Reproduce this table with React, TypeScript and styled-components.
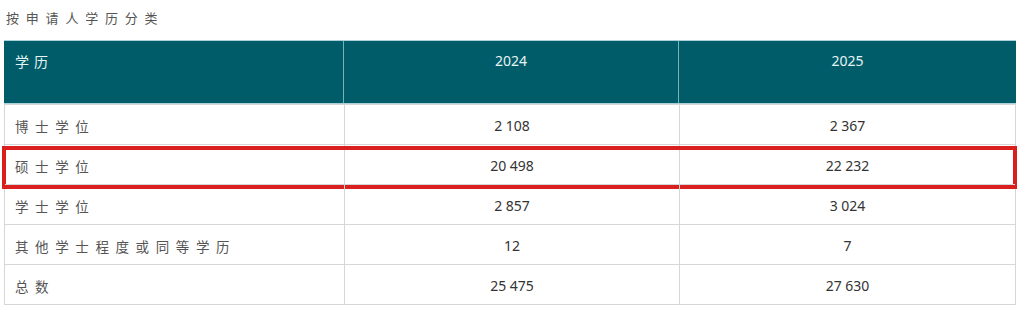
import styled, { createGlobalStyle } from "styled-components";

const GlobalStyle = createGlobalStyle`
  html, body {
    margin: 0;
    background: #fff;
  }
  body {
    font-family: "Noto Sans", "Noto Sans CJK SC", sans-serif;
  }
`;

const Page = styled.div`
  padding: 9px 8px 0 4px;
  width: 1012px;
`;

const Caption = styled.div`
  font-family: "Noto Sans CJK SC", sans-serif;
  font-size: 13px;
  line-height: 18px;
  letter-spacing: 6.8px;
  color: #555;
  padding-left: 2px;
  margin-bottom: 13px;
`;

const Table = styled.div`
  border: 1px solid #d6d6d6;
  border-top: none;
`;

const Row = styled.div<{ $highlight?: boolean }>`
  position: relative;
  box-sizing: border-box;
  display: grid;
  grid-template-columns: 339px 335px 1fr;
  height: 40px;
  padding-top: 2px;
  border-top: 1px solid #d6d6d6;

  ${(p) =>
    p.$highlight &&
    `
    &::after {
      content: "";
      position: absolute;
      left: -3px;
      right: -2px;
      top: 1px;
      bottom: -5px;
      border: 4px solid #d9201f;
      pointer-events: none;
    }
  `}
`;

const HeadRow = styled.div`
  display: grid;
  grid-template-columns: 339px 335px 1fr;
  height: 62px;
  background: #005c68;
  border-top: 1px solid #a9d1d8;
  border-bottom: 1px solid #a9d1d8;
  margin-left: -1px;
  margin-right: -1px;
`;

const HeadCell = styled.div<{ $first?: boolean }>`
  padding: 10px 10px 0 ${(p) => (p.$first ? "11px" : "10px")};
  font-family: ${(p) => (p.$first ? `"Noto Sans CJK SC"` : `"Noto Sans"`)}, sans-serif;
  font-size: 14px;
  line-height: 20px;
  letter-spacing: ${(p) => (p.$first ? "5px" : "0")};
  color: #e6f4f5;
  text-align: ${(p) => (p.$first ? "left" : "center")};
  border-left: ${(p) => (p.$first ? "none" : "1px solid #7fb0b8")};
`;

const LabelCell = styled.div`
  display: flex;
  align-items: center;
  padding-left: 10px;
  font-family: "Noto Sans CJK SC", sans-serif;
  font-size: 13.5px;
  letter-spacing: 6.6px;
  color: #555;
`;

const NumCell = styled.div`
  display: flex;
  align-items: center;
  justify-content: center;
  border-left: 1px solid #d6d6d6;
  margin-top: -2px;
  padding-top: 2px;
  font-family: "Noto Sans", sans-serif;
  font-size: 14px;
  color: #333;
`;

const rows = [
  { label: "博士学位", y2024: "2\u00a0108", y2025: "2\u00a0367" },
  { label: "硕士学位", y2024: "20\u00a0498", y2025: "22\u00a0232", highlight: true },
  { label: "学士学位", y2024: "2\u00a0857", y2025: "3\u00a0024" },
  { label: "其他学士程度或同等学历", y2024: "12", y2025: "7" },
  { label: "总数", y2024: "25\u00a0475", y2025: "27\u00a0630" },
];

export default function App() {
  return (
    <>
      <GlobalStyle />
      <Page>
        <Caption>按申请人学历分类</Caption>
        <Table>
          <HeadRow>
            <HeadCell $first>学历</HeadCell>
            <HeadCell>2024</HeadCell>
            <HeadCell>2025</HeadCell>
          </HeadRow>
          {rows.map((r) => (
            <Row key={r.label} $highlight={r.highlight}>
              <LabelCell>{r.label}</LabelCell>
              <NumCell>{r.y2024}</NumCell>
              <NumCell>{r.y2025}</NumCell>
            </Row>
          ))}
        </Table>
      </Page>
    </>
  );
}
